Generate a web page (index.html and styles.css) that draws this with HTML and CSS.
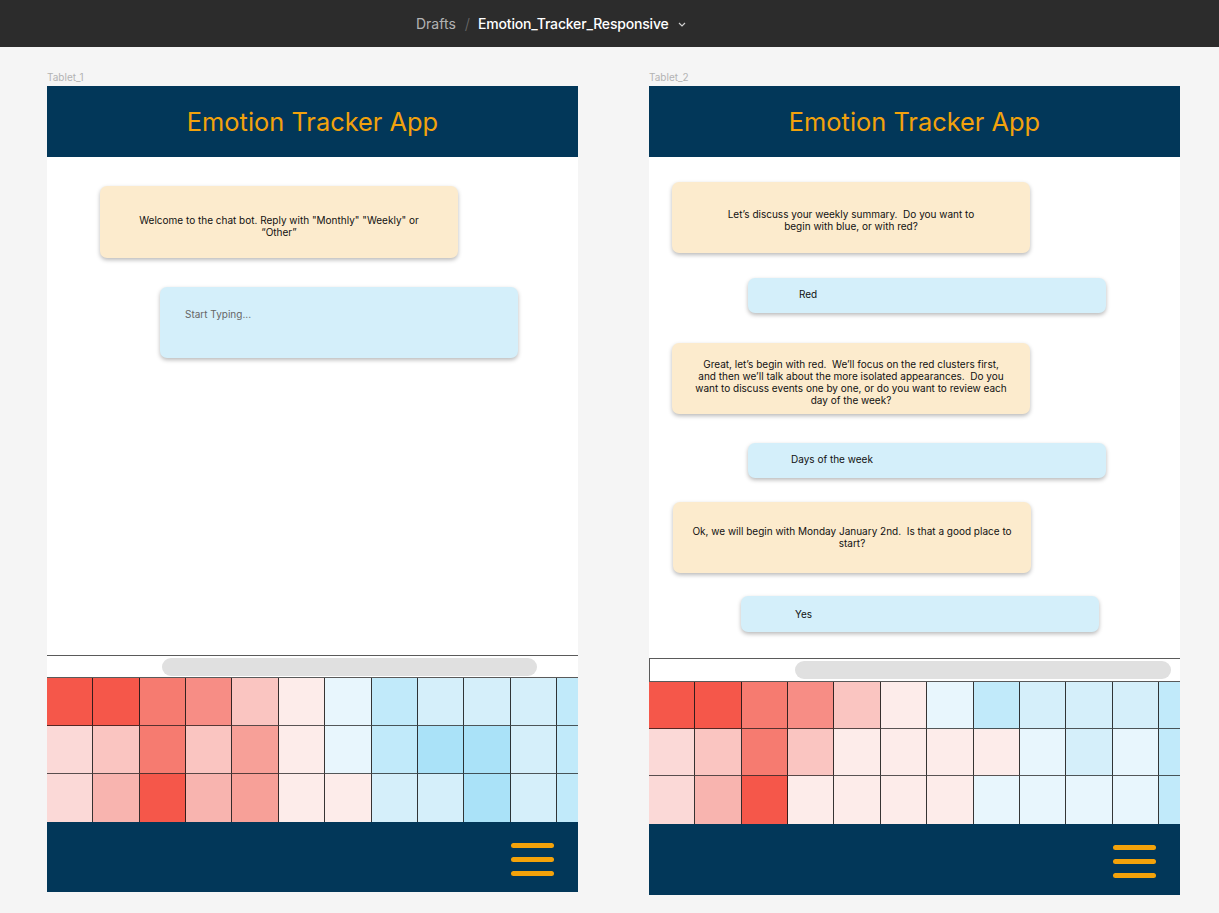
FILE: index.html
```html
<!DOCTYPE html>
<html lang="en">
<head>
<meta charset="utf-8">
<title>Emotion_Tracker_Responsive</title>
<link rel="stylesheet" href="styles.css">
</head>
<body>
<header class="topbar">
  <span class="crumb">Drafts</span>
  <span class="sep">/</span>
  <span class="file">Emotion_Tracker_Responsive</span>
  <svg class="chev" width="8" height="5" viewBox="0 0 8 5"><path d="M1 1 L4 4 L7 1" fill="none" stroke="#cfcfcf" stroke-width="1.2"/></svg>
</header>

<main class="canvas">
  <section class="board">
    <div class="label">Tablet_1</div>
    <div class="frame frame-1">
      <div class="app-head"><h1>Emotion Tracker App</h1></div>
      <div class="chat chat-1">
        <div class="bubble bot t1-bot">Welcome to the chat bot. Reply with "Monthly" "Weekly" or<br>“Other”</div>
        <div class="bubble user t1-input">Start Typing...</div>
      </div>
      <div class="scroll scroll-1"><div class="pill pill-1"></div></div>
      <div class="heat heat-1">
        <i class="r6"></i><i class="r6"></i><i class="r5"></i><i class="r4"></i><i class="r2"></i><i class="r0"></i><i class="b0"></i><i class="b2"></i><i class="b1"></i><i class="b1"></i><i class="b1"></i><i class="b2"></i>
        <i class="r1"></i><i class="r2"></i><i class="r5"></i><i class="r2"></i><i class="r3a"></i><i class="r0"></i><i class="b0"></i><i class="b2"></i><i class="b3"></i><i class="b3"></i><i class="b1"></i><i class="b2"></i>
        <i class="r1"></i><i class="r3"></i><i class="r6"></i><i class="r3"></i><i class="r3a"></i><i class="r0"></i><i class="r0"></i><i class="b1"></i><i class="b1"></i><i class="b3"></i><i class="b1"></i><i class="b2"></i>
      </div>
      <footer class="app-foot">
        <span class="burger"><span></span><span></span><span></span></span>
      </footer>
    </div>
  </section>

  <section class="board">
    <div class="label">Tablet_2</div>
    <div class="frame frame-2">
      <div class="app-head"><h1>Emotion Tracker App</h1></div>
      <div class="chat chat-2">
        <div class="bubble bot m1">Let’s discuss your weekly summary.&nbsp; Do you want to<br>begin with blue, or with red?</div>
        <div class="bubble user short m2 p51">Red</div>
        <div class="bubble bot m3">Great, let’s begin with red.&nbsp; We’ll focus on the red clusters first,<br>and then we’ll talk about the more isolated appearances.&nbsp; Do you<br>want to discuss events one by one, or do you want to review each<br>day of the week?</div>
        <div class="bubble user short m4 p43">Days of the week</div>
        <div class="bubble bot m5 shift1">Ok, we will begin with Monday January 2nd.&nbsp; Is that a good place to<br>start?</div>
        <div class="bubble user short m6 p54 left92">Yes</div>
      </div>
      <div class="scroll scroll-2"><div class="pill pill-2"></div></div>
      <div class="heat heat-2">
        <i class="r6"></i><i class="r6"></i><i class="r5"></i><i class="r4"></i><i class="r2"></i><i class="r0"></i><i class="b0"></i><i class="b2"></i><i class="b1"></i><i class="b1"></i><i class="b1"></i><i class="b2"></i>
        <i class="r1"></i><i class="r2"></i><i class="r5"></i><i class="r2"></i><i class="r0"></i><i class="r0"></i><i class="r0"></i><i class="r0"></i><i class="b0"></i><i class="b1"></i><i class="b0"></i><i class="b2"></i>
        <i class="r1"></i><i class="r3"></i><i class="r6"></i><i class="r0"></i><i class="r0"></i><i class="r0"></i><i class="r0"></i><i class="b0"></i><i class="b0"></i><i class="b0"></i><i class="b0"></i><i class="b2"></i>
      </div>
      <footer class="app-foot">
        <span class="burger"><span></span><span></span><span></span></span>
      </footer>
    </div>
  </section>
</main>
</body>
</html>
```

FILE: styles.css
```css
* { box-sizing: border-box; }
html, body { margin: 0; padding: 0; }
body {
  background: #f5f5f5;
  font-family: Inter, "Noto Sans", "Liberation Sans", sans-serif;
  width: 1219px;
  height: 913px;
  overflow: hidden;
}

.topbar {
  height: 47px;
  background: #2c2c2c;
  display: flex;
  align-items: center;
  padding-left: 416px;
  font-size: 14px;
}
.crumb { color: #b3b3b3; }
.sep { color: #6a6a6a; margin: 0 8px 0 9px; font-weight: 300; font-size: 15px; }
.file { color: #ffffff; font-weight: 500; letter-spacing: -0.18px; }
.chev { margin-left: 9px; margin-top: 1px; }

.canvas {
  display: flex;
  align-items: flex-start;
  gap: 71px;
  padding: 24px 0 0 47px;
}
.board { width: 531px; }
.label {
  font-size: 10px;
  color: #b3b3b3;
  height: 15px;
  line-height: 13px;
}
.frame {
  width: 531px;
  background: #ffffff;
  display: flex;
  flex-direction: column;
  overflow: hidden;
}

.app-head {
  height: 71px;
  background: #023759;
  display: flex;
  align-items: center;
  justify-content: center;
}
.app-head h1 {
  margin: 0;
  font-weight: 400;
  font-size: 25.4px;
  color: #f2a20c;
}

.chat { display: flex; flex-direction: column; align-items: flex-start; }
.chat-1 { height: 498px; padding-top: 29px; }
.chat-2 { height: 501px; padding-top: 25px; }

.bubble {
  width: 358px;
  border-radius: 7px;
  box-shadow: 0 2px 4px rgba(0, 0, 0, 0.28);
  font-size: 10px;
  line-height: 12px;
  color: #111;
  flex-shrink: 0;
}
.bot {
  background: #fcebcd;
  height: 71px;
  display: flex;
  align-items: center;
  justify-content: center;
  text-align: center;
  padding-top: 4px;
}
.user { background: #d4effa; }

.t1-bot { margin-left: 53px; height: 72px; padding-top: 8px; }
.t1-input {
  margin-left: 113px;
  margin-top: 29px;
  height: 71px;
  padding: 21px 0 0 25px;
  color: #666;
}

.chat-2 .bot { margin-left: 23px; }
.short {
  height: 35px;
  display: flex;
  align-items: center;
  margin-left: 99px;
}
.m2 { margin-top: 25px; }
.m3 { margin-top: 30px; padding-top: 6px; }
.m4 { margin-top: 29px; }
.m5 { margin-top: 24px; padding-top: 0; }
.m6 { margin-top: 23px; height: 36px; }
.p51 { padding-left: 51px; padding-bottom: 4px; }
.p43 { padding-left: 43px; padding-bottom: 4px; }
.p54 { padding-left: 54px; }
.chat-2 .shift1 { margin-left: 24px; align-items: flex-start; padding-top: 23px; }
.left92 { margin-left: 92px; }

.scroll {
  background: #fff;
  display: flex;
  align-items: center;
  border-top: 1px solid #5a5a5a;
  border-bottom: 1.5px solid #5a5a5a;
}
.scroll-1 { height: 23px; }
.scroll-2 { height: 24px; border-left: 1px solid #5a5a5a; }
.pill {
  height: 18px;
  background: #e0e0e0;
  border-radius: 9px;
}
.pill-1 { margin-left: 115px; width: 375px; }
.pill-2 { margin-left: 145px; width: 376px; }

.heat {
  display: grid;
  grid-template-columns: repeat(12, 46.36px);
  width: 531px;
  overflow: hidden;
}
.heat-1 { grid-template-rows: repeat(3, 48px); }
.heat-2 { grid-template-rows: 47px 47px 48px; }
.heat i {
  display: block;
  width: 46.36px;
  border-right: 1px solid rgba(20, 20, 20, 0.85);
  border-bottom: 1px solid rgba(20, 20, 20, 0.7);
}
.heat i:nth-child(n+25) { border-bottom: none; }

.r6 { background: #f5574a; }
.r5 { background: #f67b70; }
.r4 { background: #f78d85; }
.r3a { background: #f7a098; }
.r3 { background: #f8b4af; }
.r2 { background: #fac5c1; }
.r1 { background: #fbd9d7; }
.r0 { background: #fdecea; }
.b0 { background: #e8f6fd; }
.b1 { background: #d5effa; }
.b2 { background: #c1eafa; }
.b3 { background: #aae2f8; }

.app-foot {
  height: 70px;
  background: #023759;
  display: flex;
  align-items: center;
  justify-content: flex-end;
  padding-right: 24px;
  padding-top: 4px;
}
.frame-2 .app-foot { height: 71px; }
.burger {
  display: flex;
  flex-direction: column;
  gap: 9px;
  width: 43px;
}
.burger span {
  height: 5px;
  border-radius: 3px;
  background: #f3a20a;
}
```
